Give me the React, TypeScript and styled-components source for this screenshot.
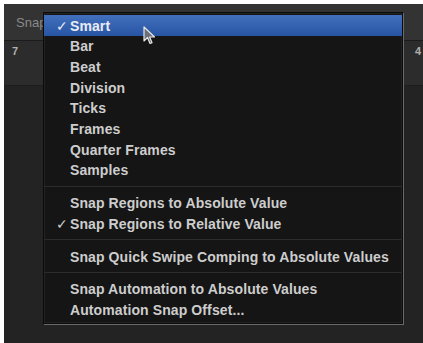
import React from "react";
import styled, { createGlobalStyle } from "styled-components";

const Global = createGlobalStyle`
  html, body { margin: 0; padding: 0; background: #ffffff; }
  body { width: 423px; height: 343px; overflow: hidden; font-family: "Liberation Sans", Arial, sans-serif; }
`;

const Frame = styled.div`
  position: relative;
  margin: 4px 0 0 4px;
  width: 419px;
  height: 339px;
  background: #252525;
  display: flex;
  flex-direction: column;
  overflow: hidden;
`;

const Toolbar = styled.div`
  height: 36px;
  background: #333333;
  border-bottom: 1px solid #1c1c1c;
  display: flex;
  align-items: center;
  padding-left: 12px;
  color: #8a8a8a;
  font-size: 13px;
`;

const Ruler = styled.div`
  height: 40px;
  background: #2c2c2c;
  border-bottom: 1px solid #1e1e1e;
  display: flex;
  justify-content: space-between;
  align-items: flex-start;
  padding: 4px 2px 0 8px;
  color: #b0b0b0;
  font-size: 11px;
  font-weight: bold;
`;

const Body = styled.div`
  flex: 1;
  background: #232323;
`;

const Menu = styled.div`
  position: absolute;
  left: 39px;
  top: 8px;
  width: 358px;
  padding: 2px 0 3px;
  background: #151515;
  border: 1px solid #0b0b0b;
  box-shadow: 1px 1px 0 #6a6a6a, inset 0 0 0 1px #222;
  display: flex;
  flex-direction: column;
`;

const Item = styled.div<{ $active?: boolean }>`
  position: relative;
  height: ${(p) => (p.$active ? "21px" : "20.7px")};
  display: flex;
  align-items: center;
  padding-left: 26px;
  font-size: 14px;
  letter-spacing: 0.1px;
  font-weight: bold;
  color: ${(p) => (p.$active ? "#e8ecf4" : "#cdcdcd")};
  background: ${(p) => (p.$active ? "linear-gradient(#4270bd, #2855a3)" : "transparent")};
  white-space: nowrap;
`;

const Check = styled.span`
  position: absolute;
  left: 12px;
  font-weight: normal;
  font-size: 14px;
`;

const Sep = styled.div`
  height: 1px;
  margin: 5px 0 6px;
  background: #2c2c2c;
`;

const Cursor = styled.svg`
  position: absolute;
  left: 139px;
  top: 22px;
`;

const Item2 = ({ label, checked, active }: { label: string; checked?: boolean; active?: boolean }) => (
  <Item $active={active}>
    {checked && <Check>✓</Check>}
    {label}
  </Item>
);

export default function App() {
  return (
    <>
      <Global />
      <Frame>
        <Toolbar>Snap</Toolbar>
        <Ruler>
          <span>7</span>
          <span>4</span>
        </Ruler>
        <Body />
        <Menu>
          <Item2 label="Smart" checked active />
          <Item2 label="Bar" />
          <Item2 label="Beat" />
          <Item2 label="Division" />
          <Item2 label="Ticks" />
          <Item2 label="Frames" />
          <Item2 label="Quarter Frames" />
          <Item2 label="Samples" />
          <Sep />
          <Item2 label="Snap Regions to Absolute Value" />
          <Item2 label="Snap Regions to Relative Value" checked />
          <Sep />
          <Item2 label="Snap Quick Swipe Comping to Absolute Values" />
          <Sep />
          <Item2 label="Snap Automation to Absolute Values" />
          <Item2 label="Automation Snap Offset..." />
        </Menu>
        <Cursor width="14" height="20" viewBox="0 0 14 20">
          <path d="M1 1 L1 15 L4.5 11.5 L7 17.5 L9 16.6 L6.6 11 L11.5 11 Z" fill="#6a6f7a" stroke="#e6e6e6" strokeWidth="1.2" strokeLinejoin="round" />
        </Cursor>
      </Frame>
    </>
  );
}
